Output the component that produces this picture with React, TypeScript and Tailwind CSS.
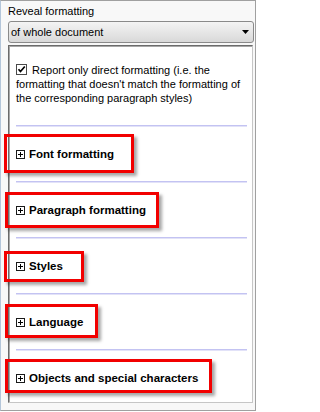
import React from "react";

function PlusBox() {
  return (
    <svg width="9" height="9" viewBox="0 0 9 9" className="shrink-0">
      <rect x="0.5" y="0.5" width="8" height="8" fill="white" stroke="#1a1a1a" strokeWidth="1" />
      <line x1="2" y1="4.5" x2="7" y2="4.5" stroke="#000" strokeWidth="1" />
      <line x1="4.5" y1="2" x2="4.5" y2="7" stroke="#000" strokeWidth="1" />
    </svg>
  );
}

function Separator() {
  return (
    <div className="ml-[7px] mr-[5px] h-[2px] border-t border-[#c3c3f2] bg-[#e2e2f8]" />
  );
}

type Sec = { label: string; box: { top: number; left: number; w: number; h: number } };

const sections: Sec[] = [
  { label: "Font formatting", box: { top: 7, left: -5, w: 130, h: 39 } },
  { label: "Paragraph formatting", box: { top: 9, left: -4, w: 154, h: 36 } },
  { label: "Styles", box: { top: 12, left: -5, w: 80, h: 31 } },
  { label: "Language", box: { top: 9, left: -4, w: 93, h: 34 } },
  { label: "Objects and special characters", box: { top: 8, left: -4, w: 207, h: 34 } },
];

export default function App() {
  return (
    <div className="w-[260px] h-[412px] bg-white text-black font-['Liberation_Sans',Arial,sans-serif]">
      <div className="w-[256px] h-[411px] border border-[#a0a0a0] border-l-[#b4c6da] bg-[#f8f8f8] pl-[7px] pt-[3px]">
        <div className="text-[11px] leading-[14px]">Reveal formatting</div>
        <div className="mt-[3px] w-[246px] h-[22px] rounded-[3px] border border-[#8a8a8a] bg-gradient-to-b from-[#f4f4f4] to-[#d9d9d9] flex items-center justify-between pl-[2px] pr-[4px] text-[11px] leading-[14px]">
          <span>of whole document</span>
          <svg width="7" height="4" viewBox="0 0 7 4">
            <polygon points="0,0 7,0 3.5,4" fill="#000" />
          </svg>
        </div>
        <div className="mt-[2px] w-[245px] h-[358px] bg-white border border-[#c6c6c6] border-t-[#6b6b6b] border-l-[#6b6b6b] shadow-[inset_1px_1px_0_#a8a8a8]">
          <div className="pt-[17px] pl-[7px] pr-[5px] text-[11px] leading-[14px]">
            <span className="inline-block w-[11px] h-[11px] mr-[5px] align-[-1px] border border-[#4a4a4a] bg-white relative">
              <svg width="9" height="9" viewBox="0 0 9 9" className="absolute left-0 top-0">
                <path d="M1.5 4.2 L3.5 6.5 L7.8 1.5" fill="none" stroke="#000" strokeWidth="1.7" />
              </svg>
            </span>
            Report only direct formatting (i.e. the formatting that doesn't match the formatting of the corresponding paragraph styles)
          </div>
          <div className="mt-[20px]">
            {sections.map((s) => (
              <div key={s.label}>
                <Separator />
                <div className="relative h-[54px] flex items-center pl-[7px] gap-[4px]">
                  <PlusBox />
                  <span className="font-bold text-[11.5px] leading-[14px]">{s.label}</span>
                  <div
                    className="absolute border-[3px] border-[#f20000] shadow-[3px_3px_3px_rgba(0,0,0,0.35)]"
                    style={{ top: s.box.top, left: s.box.left, width: s.box.w, height: s.box.h }}
                  />
                </div>
              </div>
            ))}
          </div>
        </div>
      </div>
    </div>
  );
}
